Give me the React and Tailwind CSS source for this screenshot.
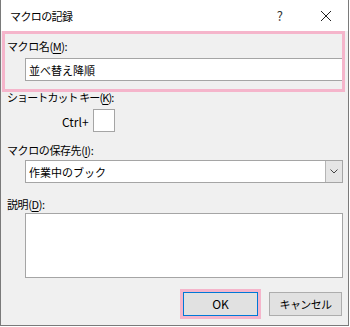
import React from 'react';

const font = { fontFamily: '"Noto Sans CJK JP", "Noto Sans", sans-serif' };

function U({ children }) {
  return <span className="underline decoration-1 underline-offset-2">{children}</span>;
}

export default function App() {
  return (
    <div
      style={font}
      className="h-[326px] w-[349px] border-x border-b border-[#7a7a7a] bg-[#f0f0f0] text-[11px] leading-[14px] text-black"
    >
      {/* title bar */}
      <div className="flex h-[31px] items-center bg-white pl-[9px]">
        <span className="text-[11px] tracking-[-0.6px]">マクロの記録</span>
        <span className="ml-auto mr-[37px] text-[13px] text-[#333]">?</span>
        <svg width="12" height="12" viewBox="0 0 12 12" className="mr-[16px]">
          <path d="M1 1 L11 11 M11 1 L1 11" stroke="#222" strokeWidth="1" fill="none" />
        </svg>
      </div>

      {/* macro name */}
      <div className="ml-[1px] w-[343px] border-[3px] border-[#f5b5cb] pb-[8px] pt-[5px]">
        <div className="pl-[2px] tracking-[-0.4px]">
          マクロ名(<U>M</U>):
        </div>
        <div className="ml-[20px] mt-[5px] flex h-[23px] items-center border-y border-l border-[#a5a5a5] bg-white pl-[3px]">
          並べ替え降順
        </div>
      </div>

      <div className="pl-[6px]">
        <div className="mt-[-2px] tracking-[-0.9px]">
          ショートカット キー(<U>K</U>):
        </div>
        <div className="mt-[5px] flex items-center pl-[55px]">
          <span className="mt-[2px] text-[12px]">Ctrl+</span>
          <div className="ml-[4px] h-[23px] w-[22px] border border-[#a5a5a5] bg-white" />
        </div>

        <div className="mt-[11px] tracking-[-0.4px]">
          マクロの保存先(<U>I</U>):
        </div>
        <div className="ml-[18px] mt-[3px] flex h-[23px] w-[318px] border border-[#a5a5a5] bg-white">
          <div className="flex flex-1 items-center pl-[3px]">作業中のブック</div>
          <div className="flex w-[17px] items-center justify-center border-l border-[#b5b5b5] bg-[#e5e5e5]">
            <svg width="8" height="5" viewBox="0 0 8 5">
              <path d="M0.5 0.5 L4 4 L7.5 0.5" stroke="#444" strokeWidth="1" fill="none" />
            </svg>
          </div>
        </div>

        <div className="mt-[14px] tracking-[-0.4px]">
          説明(<U>D</U>):
        </div>
        <div className="ml-[18px] mt-[2px] h-[65px] w-[318px] border border-[#a5a5a5] bg-white" />
      </div>

      <div className="mt-[11px] flex justify-end pr-[6px]">
        <div className="border-[3px] border-[#f5b5cb]">
          <button className="flex h-[24px] w-[75px] items-center justify-center border border-[#0078d7] bg-[#e1e1e1] text-[12px]">
            OK
          </button>
        </div>
        <button className="ml-[8px] mt-[3px] flex h-[24px] w-[73px] items-center justify-center border border-[#adadad] bg-[#e1e1e1] tracking-[-0.6px]">
          キャンセル
        </button>
      </div>
    </div>
  );
}
